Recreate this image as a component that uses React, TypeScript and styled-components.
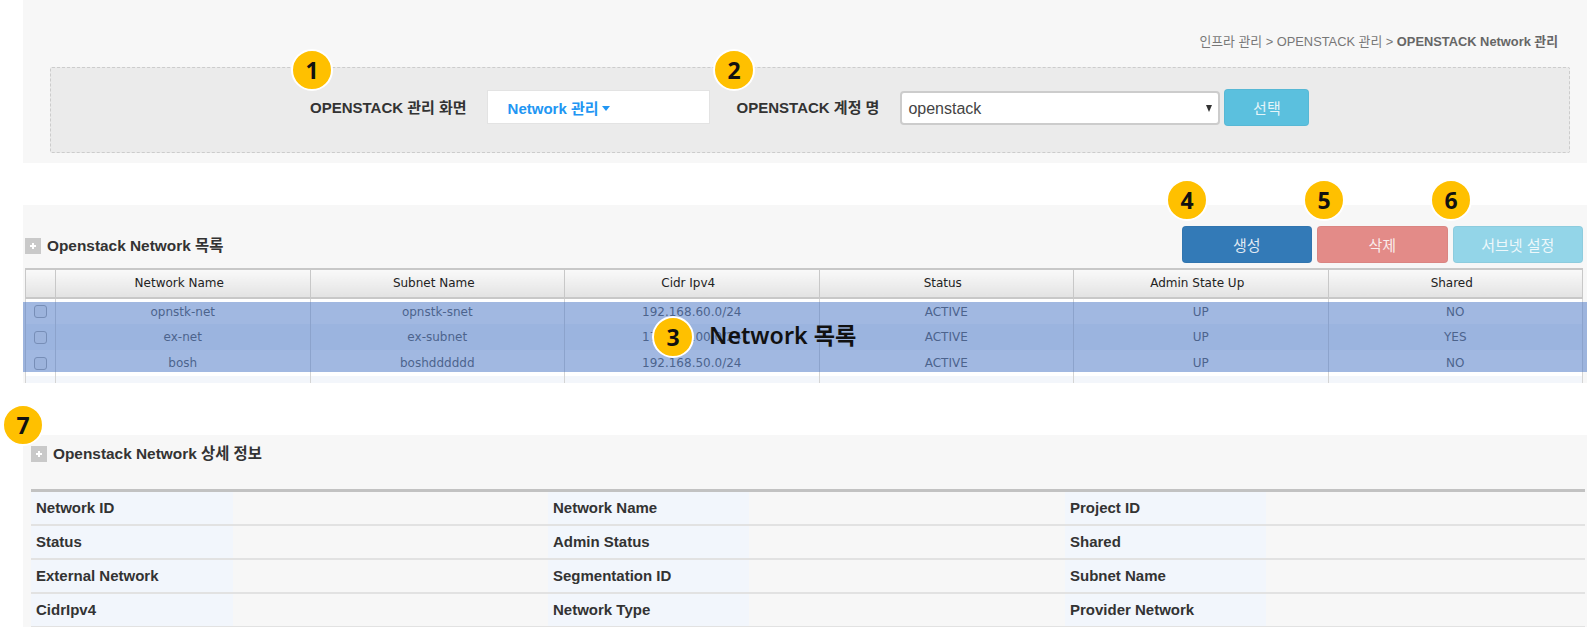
import React from "react"
import styled, { createGlobalStyle } from "styled-components"

const SANS = `"Liberation Sans", "Noto Sans CJK KR", sans-serif`
const GRID_FONT = `"DejaVu Sans", "Noto Sans CJK KR", sans-serif`

const GlobalStyle = createGlobalStyle`
  html, body {
    margin: 0;
    padding: 0;
    background: #fff;
    overflow: hidden;
  }
  * {
    box-sizing: border-box;
  }
`

const Page = styled.div`
  position: relative;
  width: 1587px;
  height: 627px;
  padding-left: 23px;
  overflow: hidden;
  font-family: ${SANS};
`

const Panel = styled.section<{ $height: number; $gap: number }>`
  height: ${(props) => props.$height}px;
  margin-bottom: ${(props) => props.$gap}px;
  background: #f7f7f7;
  overflow: hidden;
`

const Breadcrumb = styled.div`
  height: 67px;
  padding: 35px 29px 0 0;
  text-align: right;
  font-size: 12.85px;
  line-height: 14px;
  color: #777;
  b {
    color: #666;
  }
`

const SearchBox = styled.div`
  display: flex;
  align-items: center;
  width: 1520px;
  height: 86px;
  margin-left: 27px;
  padding: 0 0 8px 259px;
  background: #ebebeb;
  border: 1px dashed #ccc;
  border-radius: 2px;
`

const FieldLabel = styled.label`
  font-size: 15px;
  font-weight: 700;
  color: #333;
  white-space: nowrap;
`

const MenuBox = styled.div`
  display: flex;
  align-items: center;
  width: 223px;
  height: 34px;
  margin: 2px 27px 0 20px;
  padding-left: 20px;
  background: #fff;
  border: 1px solid #e3e3e3;
  font-size: 15px;
  font-weight: 700;
  color: #2196f3;
`

const Caret = styled.span`
  width: 0;
  height: 0;
  margin: 3px 0 0 3px;
  border-left: 4px solid transparent;
  border-right: 4px solid transparent;
  border-top: 5px solid #2196f3;
`

const SelectWrap = styled.div`
  position: relative;
  width: 320px;
  height: 34px;
  margin: 4px 4px 0 21px;
  &::after {
    content: "";
    position: absolute;
    right: 8px;
    top: 14px;
    border-left: 3.5px solid transparent;
    border-right: 3.5px solid transparent;
    border-top: 7px solid #333;
    pointer-events: none;
  }
`

const AccountSelect = styled.select`
  width: 100%;
  height: 100%;
  padding-left: 6px;
  appearance: none;
  background: #fff;
  border: 2px solid #ccc;
  border-radius: 4px;
  font-family: ${SANS};
  font-size: 16px;
  color: #444;
`

const ActionButton = styled.button<{ $color: string; $width: number }>`
  width: ${(props) => props.$width}px;
  height: 37px;
  background: ${(props) => props.$color};
  border: 1px solid rgba(0, 0, 0, 0.04);
  border-radius: 4px;
  font-family: ${SANS};
  font-size: 15px;
  color: rgba(255, 255, 255, 0.85);
`

const SelectButton = styled(ActionButton)`
  margin-top: 3px;
`

const Toolbar = styled.div`
  display: flex;
  align-items: flex-end;
  justify-content: space-between;
  height: 63px;
  padding: 0 4px 5px 2px;
`

const ButtonGroup = styled.div`
  display: flex;
  gap: 5px;
`

const SectionTitle = styled.h2<{ $offset: number }>`
  display: flex;
  align-items: center;
  gap: 6px;
  margin: 0 0 ${(props) => props.$offset}px;
  font-size: 15.4px;
  line-height: 16px;
  font-weight: 700;
  color: #333;
`

const PlusIcon = () => (
  <svg width="16" height="16" viewBox="0 0 16 16" aria-hidden="true">
    <rect width="16" height="16" fill="#c9c9c9" />
    <path d="M5 8h6M8 5v6" stroke="#fff" strokeWidth="2" />
  </svg>
)

const GridTable = styled.table`
  width: 1558px;
  margin-left: 2px;
  border-collapse: collapse;
  table-layout: fixed;
  font-family: ${GRID_FONT};
  font-size: 12px;
`

const HeadCell = styled.th`
  height: 29px;
  padding: 0 7px 2px 0;
  background: linear-gradient(#f9f9f9, #e3e3e3);
  border: 1px solid #c8c8c8;
  border-top-width: 2px;
  border-bottom-width: 2px;
  font-weight: 400;
  color: #222;
`

const Row = styled.tr`
  &:nth-child(even) td {
    background: #f3f6fb;
  }
`

const Cell = styled.td`
  height: 26px;
  padding: 0;
  background: #fff;
  border-left: 1px solid #d4d4d4;
  border-right: 1px solid #d4d4d4;
  text-align: center;
  color: #555;
`

const RowCheck = styled.input`
  display: block;
  width: 13px;
  height: 13px;
  margin: 0 0 0 8px;
  appearance: none;
  background: #f4f4f4;
  border: 1px solid #aaa;
  border-radius: 3px;
`

// the blue marker the screenshot author laid over the grid rows
const RowHighlight = styled.div`
  position: absolute;
  left: 23px;
  top: 302px;
  width: 1564px;
  height: 70px;
  background: rgba(68, 114, 196, 0.5);
`

const HighlightCaption = styled.div`
  position: absolute;
  left: 709px;
  top: 320px;
  font-family: "Noto Sans", "Noto Sans CJK KR", sans-serif;
  font-size: 23.2px;
  line-height: 30px;
  font-weight: 600;
  color: #111;
`

const Badge = styled.span<{ $x: number; $y: number }>`
  position: absolute;
  left: ${(props) => props.$x - 21}px;
  top: ${(props) => props.$y - 21}px;
  display: flex;
  align-items: center;
  justify-content: center;
  width: 42px;
  height: 42px;
  background: #ffc000;
  border: 2px solid #fff;
  border-radius: 50%;
  font-family: "Noto Sans", sans-serif;
  font-size: 23px;
  font-weight: 700;
  color: #111;
`

const DetailHeader = styled.div`
  height: 54px;
  padding: 11px 0 0 8px;
`

const DetailGrid = styled.dl`
  display: grid;
  grid-template-columns: 202px 315px 201px 316px 201px 1fr;
  width: 1554px;
  margin: 0 0 0 8px;
  border-top: 3px solid #c2c2c2;
`

const DetailLabel = styled.dt`
  display: flex;
  align-items: center;
  height: 34px;
  padding: 0 0 2px 5px;
  background: #f2f6fc;
  border-bottom: 2px solid #e2e2e2;
  font-size: 15px;
  font-weight: 700;
  color: #333;
`

const DetailValue = styled.dd`
  height: 34px;
  margin: 0;
  border-bottom: 2px solid #e2e2e2;
`

const columns = ["Network Name", "Subnet Name", "Cidr Ipv4", "Status", "Admin State Up", "Shared"]

const networks = [
  ["opnstk-net", "opnstk-snet", "192.168.60.0/24", "ACTIVE", "UP", "NO"],
  ["ex-net", "ex-subnet", "172.16.100.0/24", "ACTIVE", "UP", "YES"],
  ["bosh", "boshdddddd", "192.168.50.0/24", "ACTIVE", "UP", "NO"],
  ["", "", "", "", "", ""]
]

const detailRows = [
  ["Network ID", "Network Name", "Project ID"],
  ["Status", "Admin Status", "Shared"],
  ["External Network", "Segmentation ID", "Subnet Name"],
  ["CidrIpv4", "Network Type", "Provider Network"]
]

const badges = [
  { label: "1", x: 312, y: 70 },
  { label: "2", x: 734, y: 70 },
  { label: "3", x: 673, y: 337 },
  { label: "4", x: 1187, y: 200 },
  { label: "5", x: 1324, y: 200 },
  { label: "6", x: 1451, y: 200 },
  { label: "7", x: 23, y: 425 }
]

const App = () => (
  <Page>
    <GlobalStyle />
    <Panel $height={163} $gap={42}>
      <Breadcrumb>
        인프라 관리 &gt; OPENSTACK 관리 &gt; <b>OPENSTACK Network 관리</b>
      </Breadcrumb>
      <SearchBox>
        <FieldLabel>OPENSTACK 관리 화면</FieldLabel>
        <MenuBox>
          Network 관리
          <Caret />
        </MenuBox>
        <FieldLabel>OPENSTACK 계정 명</FieldLabel>
        <SelectWrap>
          <AccountSelect defaultValue="openstack">
            <option value="openstack">openstack</option>
          </AccountSelect>
        </SelectWrap>
        <SelectButton $color="#5bc0de" $width={85}>
          선택
        </SelectButton>
      </SearchBox>
    </Panel>

    <Panel $height={178} $gap={52}>
      <Toolbar>
        <SectionTitle $offset={9}>
          <PlusIcon />
          Openstack Network 목록
        </SectionTitle>
        <ButtonGroup>
          <ActionButton $color="#337ab7" $width={130.5}>
            생성
          </ActionButton>
          <ActionButton $color="#e38b88" $width={130.5}>
            삭제
          </ActionButton>
          <ActionButton $color="#93d5e8" $width={130.5}>
            서브넷 설정
          </ActionButton>
        </ButtonGroup>
      </Toolbar>
      <GridTable>
        <colgroup>
          <col width="30" />
          {columns.map((name) => (
            <col key={name} />
          ))}
        </colgroup>
        <thead>
          <tr>
            <HeadCell />
            {columns.map((name) => (
              <HeadCell key={name}>{name}</HeadCell>
            ))}
          </tr>
        </thead>
        <tbody>
          {networks.map((network, index) => (
            <Row key={index}>
              <Cell>{network[0] && <RowCheck type="checkbox" />}</Cell>
              {network.map((value, cellIndex) => (
                <Cell key={cellIndex}>{value}</Cell>
              ))}
            </Row>
          ))}
        </tbody>
      </GridTable>
    </Panel>

    <Panel $height={192} $gap={0}>
      <DetailHeader>
        <SectionTitle $offset={0}>
          <PlusIcon />
          Openstack Network 상세 정보
        </SectionTitle>
      </DetailHeader>
      <DetailGrid>
        {detailRows.map((row) =>
          row.map((label) => (
            <React.Fragment key={label}>
              <DetailLabel>{label}</DetailLabel>
              <DetailValue />
            </React.Fragment>
          ))
        )}
      </DetailGrid>
    </Panel>

    <RowHighlight />
    <HighlightCaption>Network 목록</HighlightCaption>
    {badges.map((badge) => (
      <Badge key={badge.label} $x={badge.x} $y={badge.y}>
        {badge.label}
      </Badge>
    ))}
  </Page>
)

export default App
